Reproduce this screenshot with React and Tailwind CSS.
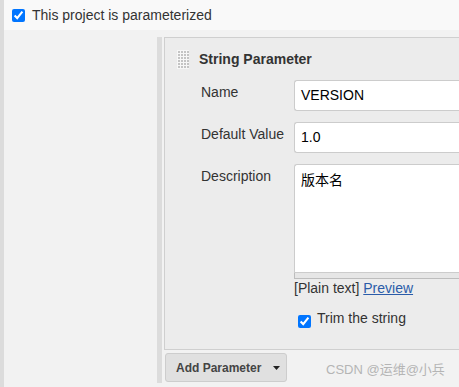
import React from "react";

const HandleIcon = () => (
  <svg width="12" height="19" viewBox="0 0 12 19" className="shrink-0">
    <rect width="12" height="19" fill="#f7f7f7" />
    {[0, 1, 2, 3, 4, 5].map((r) =>
      [0, 1, 2, 3].map((c) => (
        <rect key={`${r}-${c}`} x={1 + c * 3} y={1 + r * 3} width="2" height="2" fill="#c4c4c4" />
      ))
    )}
  </svg>
);

const App = () => {
  return (
    <div
      className="w-[459px] h-[387px] overflow-hidden flex bg-[#f2f2f2] text-[#333]"
      style={{ fontFamily: '"Liberation Sans", Arial, "Noto Sans CJK SC", sans-serif' }}
    >
      <div className="w-[4px] shrink-0 bg-[#dcdcdc]" />
      <div className="flex-1 flex flex-col min-w-0">
        {/* top row */}
        <div className="h-[30px] bg-[#f9f9f9] flex items-center pl-2 gap-[7px]">
          <input
            type="checkbox"
            checked
            readOnly
            className="w-[13px] h-[13px] m-0 accent-[#0075ff]"
          />
          <span className="text-[14px]">This project is parameterized</span>
        </div>

        <div className="flex pt-[7px] pl-[153px] h-[353px]">
          <div className="w-[5px] shrink-0 bg-[#dcdcdc]" />
          <div className="ml-[2px] flex-1 flex flex-col min-w-0">
            {/* parameter panel */}
            <div className="h-[313px] border border-r-0 border-[#cfcfcf] bg-[#ececec] pl-[12px] pt-[12px]">
              <div className="flex items-center gap-[10px] h-[19px]">
                <HandleIcon />
                <span className="text-[14px] font-bold">String Parameter</span>
              </div>

              <div className="pl-[24px] mt-[11px] flex flex-col">
                <div className="flex">
                  <div className="w-[93px] shrink-0 pt-[4px] text-[14px] leading-[16px]">Name</div>
                  <div className="flex-1 h-[31px] bg-white border border-r-0 border-[#ccc] rounded-l-[3px] pl-[6px] flex items-center text-[14px] text-black">
                    VERSION
                  </div>
                </div>

                <div className="flex mt-[11px]">
                  <div className="w-[93px] shrink-0 pt-[4px] text-[14px] leading-[16px]">Default Value</div>
                  <div className="flex-1 h-[31px] bg-white border border-r-0 border-[#ccc] rounded-l-[3px] pl-[6px] flex items-center text-[14px] text-black">
                    1.0
                  </div>
                </div>

                <div className="flex mt-[11px]">
                  <div className="w-[93px] shrink-0 pt-[4px] text-[14px] leading-[16px]">Description</div>
                  <div className="flex-1 flex flex-col">
                    <div className="h-[109px] bg-white border border-r-0 border-[#ccc] rounded-tl-[3px] pl-[6px] pt-[6px] text-[14px] leading-[18px] text-black">
                      版本名
                    </div>
                    <div className="h-[6px] bg-[#e6e6e6] border-l border-b border-[#bdbdbd]" />
                    <div className="mt-[1px] text-[14px] leading-[16px]">
                      [Plain text]{" "}
                      <span className="text-[#2b5ca9] underline">Preview</span>
                    </div>
                    <div className="flex items-start mt-[14px] pl-[4px] gap-[6px]">
                      <input
                        type="checkbox"
                        checked
                        readOnly
                        className="w-[13px] h-[13px] m-0 mt-[5px] accent-[#0075ff]"
                      />
                      <span className="text-[14px] leading-[16px]">Trim the string</span>
                    </div>
                  </div>
                </div>
              </div>
            </div>

            {/* bottom row */}
            <div className="flex items-center mt-[3px]">
              <div className="ml-[1px] h-[29px] w-[122px] bg-[#e0e0e0] border border-[#cdcdcd] rounded-[3px] flex items-center pl-[10px] gap-[12px]">
                <span className="text-[12px] font-bold text-[#444]">Add Parameter</span>
                <svg width="7" height="4" viewBox="0 0 7 4">
                  <path d="M0 0 L7 0 L3.5 4 Z" fill="#222" />
                </svg>
              </div>
              <span className="ml-[39px] mt-[5px] text-[13px] text-[#b5b5b5]">CSDN @运维@小兵</span>
            </div>
          </div>
        </div>
      </div>
    </div>
  );
};

export default App;
